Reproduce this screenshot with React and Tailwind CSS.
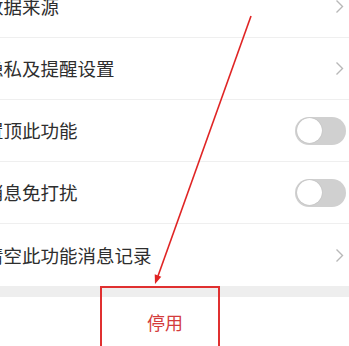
import React from 'react';

const rows = [
    { label: '数据来源', type: 'link' },
    { label: '隐私及提醒设置', type: 'link' },
    { label: '置顶此功能', type: 'toggle' },
    { label: '消息免打扰', type: 'toggle' },
    { label: '清空此功能消息记录', type: 'link', last: true },
];

const Chevron = () => (
    <svg width="9" height="15" viewBox="0 0 9 15" className="mr-[5px]">
        <path d="M1.5 1.5l6 6-6 6" fill="none" stroke="#b8b8b8" strokeWidth="1.4" />
    </svg>
);

const Toggle = () => (
    <div className="relative w-[51px] h-[28px] rounded-full bg-[#d0d0d0] mr-[3px]">
        <div className="absolute left-[2px] top-[1.5px] w-[25px] h-[25px] rounded-full bg-white shadow-[0_0_1px_rgba(0,0,0,0.25)]" />
    </div>
);

const App = () => {
    return (
        <div className="relative w-[349px] h-[346px] overflow-hidden bg-white font-['Noto_Sans_CJK_SC','Noto_Sans',sans-serif]">
            <div className="-mt-[24px]">
                {rows.map(row => (
                    <div
                        key={row.label}
                        className={`h-[62px] flex items-center justify-between ${row.last ? '' : 'border-b border-[#efefef]'}`}
                    >
                        <span className="-ml-[15px] text-[18.5px] text-[#2e2e2e] leading-none">{row.label}</span>
                        {row.type === 'toggle' ? <Toggle /> : <Chevron />}
                    </div>
                ))}
            </div>
            <div className="h-[11px] bg-[#eeeeee]" />
            <div className="h-[50px] flex items-center pl-[147px] text-[18px] text-[#d43c3c] leading-none">
                停用
            </div>

            {/* annotation overlay */}
            <svg className="absolute inset-0 pointer-events-none" width="349" height="346" viewBox="0 0 349 346">
                <line x1="251" y1="16" x2="158" y2="276" stroke="#e02424" strokeWidth="1.6" />
                <polygon points="155,284 161.3,276.7 154.7,274.3" fill="#e02424" />
                <rect x="101" y="287" width="118" height="70" fill="none" stroke="#e03030" strokeWidth="2" />
            </svg>
        </div>
    );
};

export default App;
